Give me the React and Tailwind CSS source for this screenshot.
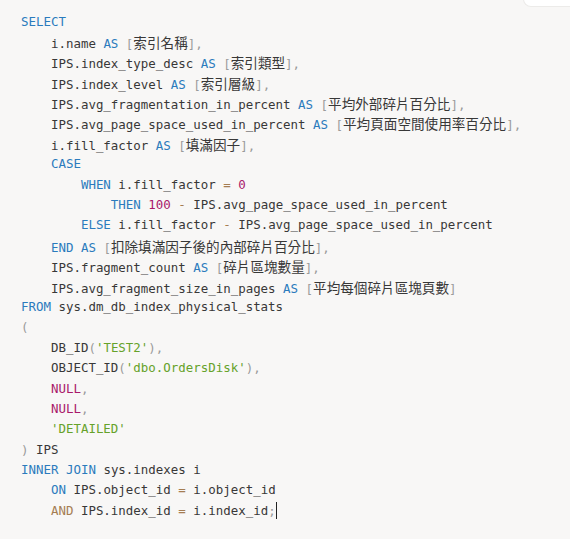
import React from "react";

const K = ({ children }) => <span className="text-[#2b7bbd]">{children}</span>;
const N = ({ children }) => <span className="text-[#a8196a]">{children}</span>;
const S = ({ children }) => <span className="text-[#66a22a]">{children}</span>;
const O = ({ children }) => <span className="text-[#a57d52]">{children}</span>;
const P = ({ children }) => <span className="text-[#9a9a9a]">{children}</span>;
const C = ({ children }) => (
  <span className="text-[13.6px] font-['Noto_Sans_CJK_TC','Noto_Sans_CJK_SC',sans-serif]">{children}</span>
);
const L = ({ children }) => <div className="h-[20.4px] whitespace-pre">{children}</div>;

const Alias = ({ t, last }) => (
  <>
    <K>AS</K> <P>[</P>
    <C>{t}</C>
    <P>]</P>
    {last ? null : <P>,</P>}
  </>
);

export default function App() {
  return (
    <div className="relative w-[570px] h-[539px] overflow-hidden bg-[#f8f7f6]">
      <div className="absolute right-0 top-[-10px] w-[47px] h-[17px] bg-white rounded-bl-[8px] border-l border-b border-[#ecebe9]" />
      <div className="pl-[21px] pt-[11.5px] text-[12.45px] leading-[20.4px] text-[#383838] font-['DejaVu_Sans_Mono',monospace]">
        <L><K>SELECT</K></L>
        <L>    i.name <Alias t="索引名稱" /></L>
        <L>    IPS.index_type_desc <Alias t="索引類型" /></L>
        <L>    IPS.index_level <Alias t="索引層級" /></L>
        <L>    IPS.avg_fragmentation_in_percent <Alias t="平均外部碎片百分比" /></L>
        <L>    IPS.avg_page_space_used_in_percent <Alias t="平均頁面空間使用率百分比" /></L>
        <L>    i.fill_factor <Alias t="填滿因子" /></L>
        <L>    <K>CASE</K></L>
        <L>        <K>WHEN</K> i.fill_factor <O>=</O> <N>0</N></L>
        <L>            <K>THEN</K> <N>100</N> <O>-</O> IPS.avg_page_space_used_in_percent</L>
        <L>        <K>ELSE</K> i.fill_factor <O>-</O> IPS.avg_page_space_used_in_percent</L>
        <L>    <K>END</K> <Alias t="扣除填滿因子後的內部碎片百分比" /></L>
        <L>    IPS.fragment_count <Alias t="碎片區塊數量" /></L>
        <L>    IPS.avg_fragment_size_in_pages <Alias t="平均每個碎片區塊頁數" last /></L>
        <L><K>FROM</K> sys.dm_db_index_physical_stats</L>
        <L><P>(</P></L>
        <L>    DB_ID<P>(</P><S>'TEST2'</S><P>),</P></L>
        <L>    OBJECT_ID<P>(</P><S>'dbo.OrdersDisk'</S><P>),</P></L>
        <L>    <N>NULL</N><P>,</P></L>
        <L>    <N>NULL</N><P>,</P></L>
        <L>    <S>'DETAILED'</S></L>
        <L><P>)</P> IPS</L>
        <L><K>INNER</K> <K>JOIN</K> sys.indexes i</L>
        <L>    <K>ON</K> IPS.object_id <O>=</O> i.object_id</L>
        <L>
          {"    "}<O>AND</O> IPS.index_id <O>=</O> i.index_id<P>;</P>
          <span className="inline-block w-px h-[17px] bg-[#222] align-[-4px]" />
        </L>
      </div>
    </div>
  );
}
